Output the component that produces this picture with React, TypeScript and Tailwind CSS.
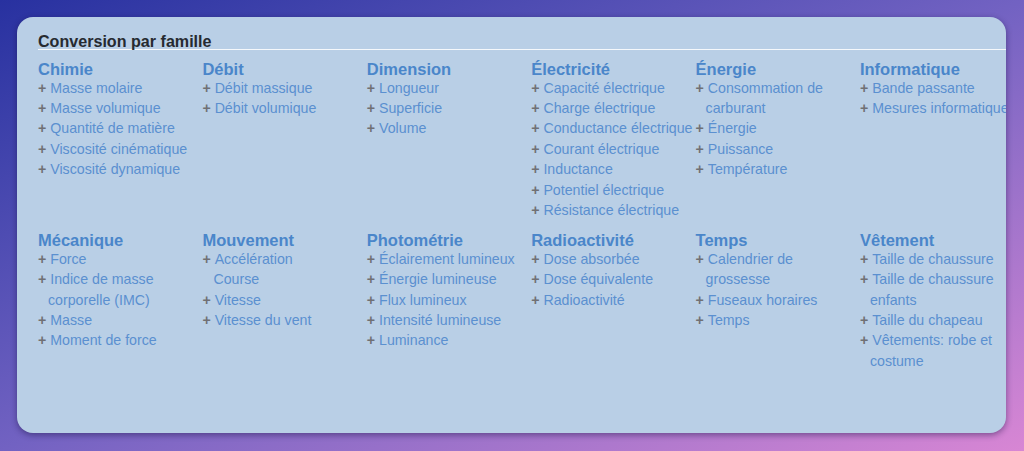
const families: { title: string; items: string[] }[] = [
  { title: "Chimie", items: ["Masse molaire", "Masse volumique", "Quantité de matière", "Viscosité cinématique", "Viscosité dynamique"] },
  { title: "Débit", items: ["Débit massique", "Débit volumique"] },
  { title: "Dimension", items: ["Longueur", "Superficie", "Volume"] },
  {
    title: "Électricité",
    items: [
      "Capacité électrique",
      "Charge électrique",
      "Conductance électrique",
      "Courant électrique",
      "Inductance",
      "Potentiel électrique",
      "Résistance électrique",
    ],
  },
  { title: "Énergie", items: ["Consommation de carburant", "Énergie", "Puissance", "Température"] },
  { title: "Informatique", items: ["Bande passante", "Mesures informatique"] },
  { title: "Mécanique", items: ["Force", "Indice de masse corporelle (IMC)", "Masse", "Moment de force"] },
  { title: "Mouvement", items: ["Accélération\nCourse", "Vitesse", "Vitesse du vent"] },
  {
    title: "Photométrie",
    items: ["Éclairement lumineux", "Énergie lumineuse", "Flux lumineux", "Intensité lumineuse", "Luminance"],
  },
  { title: "Radioactivité", items: ["Dose absorbée", "Dose équivalente", "Radioactivité"] },
  { title: "Temps", items: ["Calendrier de grossesse", "Fuseaux horaires", "Temps"] },
  {
    title: "Vêtement",
    items: ["Taille de chaussure", "Taille de chaussure enfants", "Taille du chapeau", "Vêtements: robe et costume"],
  },
]

function Item({ label }: { label: string }) {
  const [first, ...rest] = label.split("\n")
  return (
    <li className="pl-[10px] indent-[-10px] text-[14.2px] leading-[20.4px] text-[#5b90d0]">
      <span className="font-bold text-[#707074]">+ </span>
      {first}
      {rest.map((r) => (
        <span key={r}>
          <br />
          <span className="pl-[1px]">{r}</span>
        </span>
      ))}
    </li>
  )
}

export default function App() {
  return (
    <div
      className="h-[451px] w-[1024px] overflow-hidden bg-linear-to-br from-[#2831a0] via-[#7262c2] to-[#d886d4] p-[17px]"
      style={{ fontFamily: '"Liberation Sans", Arial, sans-serif' }}
    >
      <div className="h-[416px] w-[989px] overflow-hidden rounded-[16px] bg-[#b9cfe6] pl-[21px] pt-[15.5px] shadow-[0_2px_6px_rgba(20,10,60,0.45)]">
        <h2 className="border-b border-white/85 text-[16.1px] font-bold leading-[16px] text-[#262a30]">
          Conversion par famille
        </h2>

        <div className="mt-[10px] grid w-[1000px] grid-cols-[repeat(6,164.4px)] gap-y-[10.5px]">
          {families.map((f) => (
            <div key={f.title} className="pr-[2px]">
              <h3 className="text-[16.5px] font-bold leading-[18px] text-[#4a86ca]">{f.title}</h3>
              <ul>
                {f.items.map((it) => (
                  <Item key={it} label={it} />
                ))}
              </ul>
            </div>
          ))}
        </div>
      </div>
    </div>
  )
}
